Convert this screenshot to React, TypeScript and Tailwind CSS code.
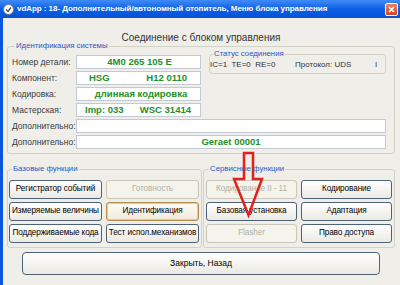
import type { ReactNode } from "react";

const font = { fontFamily: '"Liberation Sans", Arial, sans-serif' };

function Btn({ children, kind = "normal" }: { children: ReactNode; kind?: "normal" | "off" | "hot" }) {
  const look =
    kind === "off"
      ? "border-[#c9c7ba] bg-[#f4f3ec] text-[#b3b1a4]"
      : kind === "hot"
        ? "border-[#b48d4f] bg-gradient-to-b from-[#fffdf6] to-[#f1eadb] text-black shadow-[inset_0_0_0_1px_#f6c97a]"
        : "border-[#4f6177] bg-gradient-to-b from-white to-[#ebe9e1] text-black";
  return (
    <div
      className={`flex h-[19px] min-w-0 items-center justify-center overflow-hidden rounded-[3px] border text-[8.2px] tracking-[-0.1px] whitespace-nowrap ${look}`}
    >
      {children}
    </div>
  );
}

function Field({ children, className = "" }: { children?: ReactNode; className?: string }) {
  return (
    <div
      className={`flex h-[14px] min-w-0 items-center border border-[#c3cad3] bg-white text-[9.5px] font-bold text-[#23902a] ${className}`}
    >
      {children}
    </div>
  );
}

function Group({ title, children, className = "" }: { title: string; children: ReactNode; className?: string }) {
  return (
    <fieldset className={`min-w-0 rounded-[3px] border border-[#d3d2c6] ${className}`}>
      <legend className="ml-[3px] px-[1px] text-[7.8px] leading-[8px] text-[#2b58c2]">{title}</legend>
      {children}
    </fieldset>
  );
}

export default function App() {
  const leftRows: [string, ReactNode, string][] = [
    ["Номер детали:", "4M0 265 105 E", "justify-center pl-[2px]"],
    ["Компонент:", (
      <>
        <span>HSG</span>
        <span>H12 0110</span>
      </>
    ), "justify-between pl-[12px] pr-[13px]"],
    ["Кодировка:", "длинная кодировка", "justify-center pl-[5px]"],
    ["Мастерская:", (
      <>
        <span>Imp: 033</span>
        <span>WSC 31414</span>
      </>
    ), "justify-between pl-[8px] pr-[9px]"],
  ];

  return (
    <div className="relative flex h-[285px] w-[400px] flex-col overflow-hidden bg-[#efeee9]" style={font}>
      {/* title bar */}
      <div className="flex h-[18px] items-center bg-gradient-to-b from-[#3f8cf6] via-[#0b5fe6] to-[#0552d8] pl-[3px] pr-[2px]">
        <div className="flex h-[11px] w-[11px] items-center justify-center rounded-full border border-[#7a7a7a] bg-white">
          <svg width="7" height="7" viewBox="0 0 7 7">
            <path d="M1 3.5 L3 5.5 L6 1.5" stroke="#555" strokeWidth="1.4" fill="none" />
          </svg>
        </div>
        <div className="ml-[3px] min-w-0 flex-1 truncate text-[8px] font-bold tracking-[-0.05px] text-white">
          vdApp : 18- Дополнительный/автономный отопитель, Меню блока управления
        </div>
        <div className="flex h-[13px] w-[13px] items-center justify-center rounded-[2px] border border-white bg-gradient-to-b from-[#e9826a] to-[#d2401c]">
          <svg width="7" height="7" viewBox="0 0 7 7">
            <path d="M1 1 L6 6 M6 1 L1 6" stroke="white" strokeWidth="1.5" />
          </svg>
        </div>
      </div>

      {/* body */}
      <div className="flex min-w-0 flex-1 border-l-[3px] border-[#0a56dc] pl-[4px] pr-[5px]">
        <div className="flex min-w-0 flex-1 flex-col">
          <div className="mt-[14px] h-[12px] text-center text-[10px] leading-[12px] text-[#333]">
            Соединение с блоком управления
          </div>

          <Group title="Идентификация системы" className="mt-[-2px] pb-[4px] pl-[4px] pr-[8px]">
            <div className="flex">
              <div className="flex w-[190px] flex-col gap-[2px] pt-[5px]">
                {leftRows.map(([label, value, cls]) => (
                  <div key={label} className="flex items-center">
                    <div className="w-[64px] text-[8.5px] text-[#3a3a3a]">{label}</div>
                    <Field className={`w-[125px] ${cls}`}>{value}</Field>
                  </div>
                ))}
              </div>
              <Group title="Статус соединения" className="ml-[7px] h-[24px] flex-1 pl-[0px] pr-[2px]">
                <div className="flex items-center pt-[1px] text-[8px] text-[#333]">
                  <span className="w-[85px]">IC=1&nbsp; TE=0&nbsp; RE=0</span>
                  <span className="w-[80px]">Протокол: UDS</span>
                  <span>I</span>
                </div>
              </Group>
            </div>
            <div className="mt-[2px] flex flex-col gap-[2px]">
              <div className="flex items-center">
                <div className="w-[64px] text-[8.5px] text-[#3a3a3a]">Дополнительно:</div>
                <Field className="flex-1" />
              </div>
              <div className="flex items-center">
                <div className="w-[64px] text-[8.5px] text-[#3a3a3a]">Дополнительно:</div>
                <Field className="flex-1 justify-center">Geraet 00001</Field>
              </div>
            </div>
          </Group>

          <div className="mt-[11px] flex gap-[1px]">
            <Group title="Базовые функции" className="w-[195px] pb-[4px] pl-[1px] pr-[2px]">
              <div className="grid grid-cols-2 gap-x-[4px] gap-y-[3px] pt-[7px]">
                <Btn>Регистратор событий</Btn>
                <Btn kind="off">Готовность</Btn>
                <Btn>Измеряемые величины</Btn>
                <Btn kind="hot">Идентификация</Btn>
                <Btn>Поддерживаемые кода</Btn>
                <Btn>Тест испол.механизмов</Btn>
              </div>
            </Group>
            <Group title="Сервисные функции" className="flex-1 pb-[4px] px-[2px]">
              <div className="grid grid-cols-2 gap-x-[4px] gap-y-[3px] pt-[7px]">
                <Btn kind="off">Кодирование II - 11</Btn>
                <Btn>Кодирование</Btn>
                <Btn>Базовая установка</Btn>
                <Btn>Адаптация</Btn>
                <Btn kind="off">Flasher</Btn>
                <Btn>Право доступа</Btn>
              </div>
            </Group>
          </div>

          <div className="mx-[15px] mt-[4px] flex h-[23px] items-center justify-center rounded-[4px] border border-[#4f6177] bg-gradient-to-b from-white to-[#ebe9e1] text-[8.5px] text-black">
            Закрыть, Назад
          </div>
        </div>
      </div>

      {/* red arrow drawn over the dialog */}
      <svg className="absolute left-[230px] top-[149px]" width="36" height="70" viewBox="0 0 36 70">
        <path d="M14 4 H23 V30 H32 L18.5 66 L4 30 H14 Z" stroke="#e3211b" strokeWidth="2.5" fill="none" strokeLinejoin="miter" />
      </svg>
    </div>
  );
}
